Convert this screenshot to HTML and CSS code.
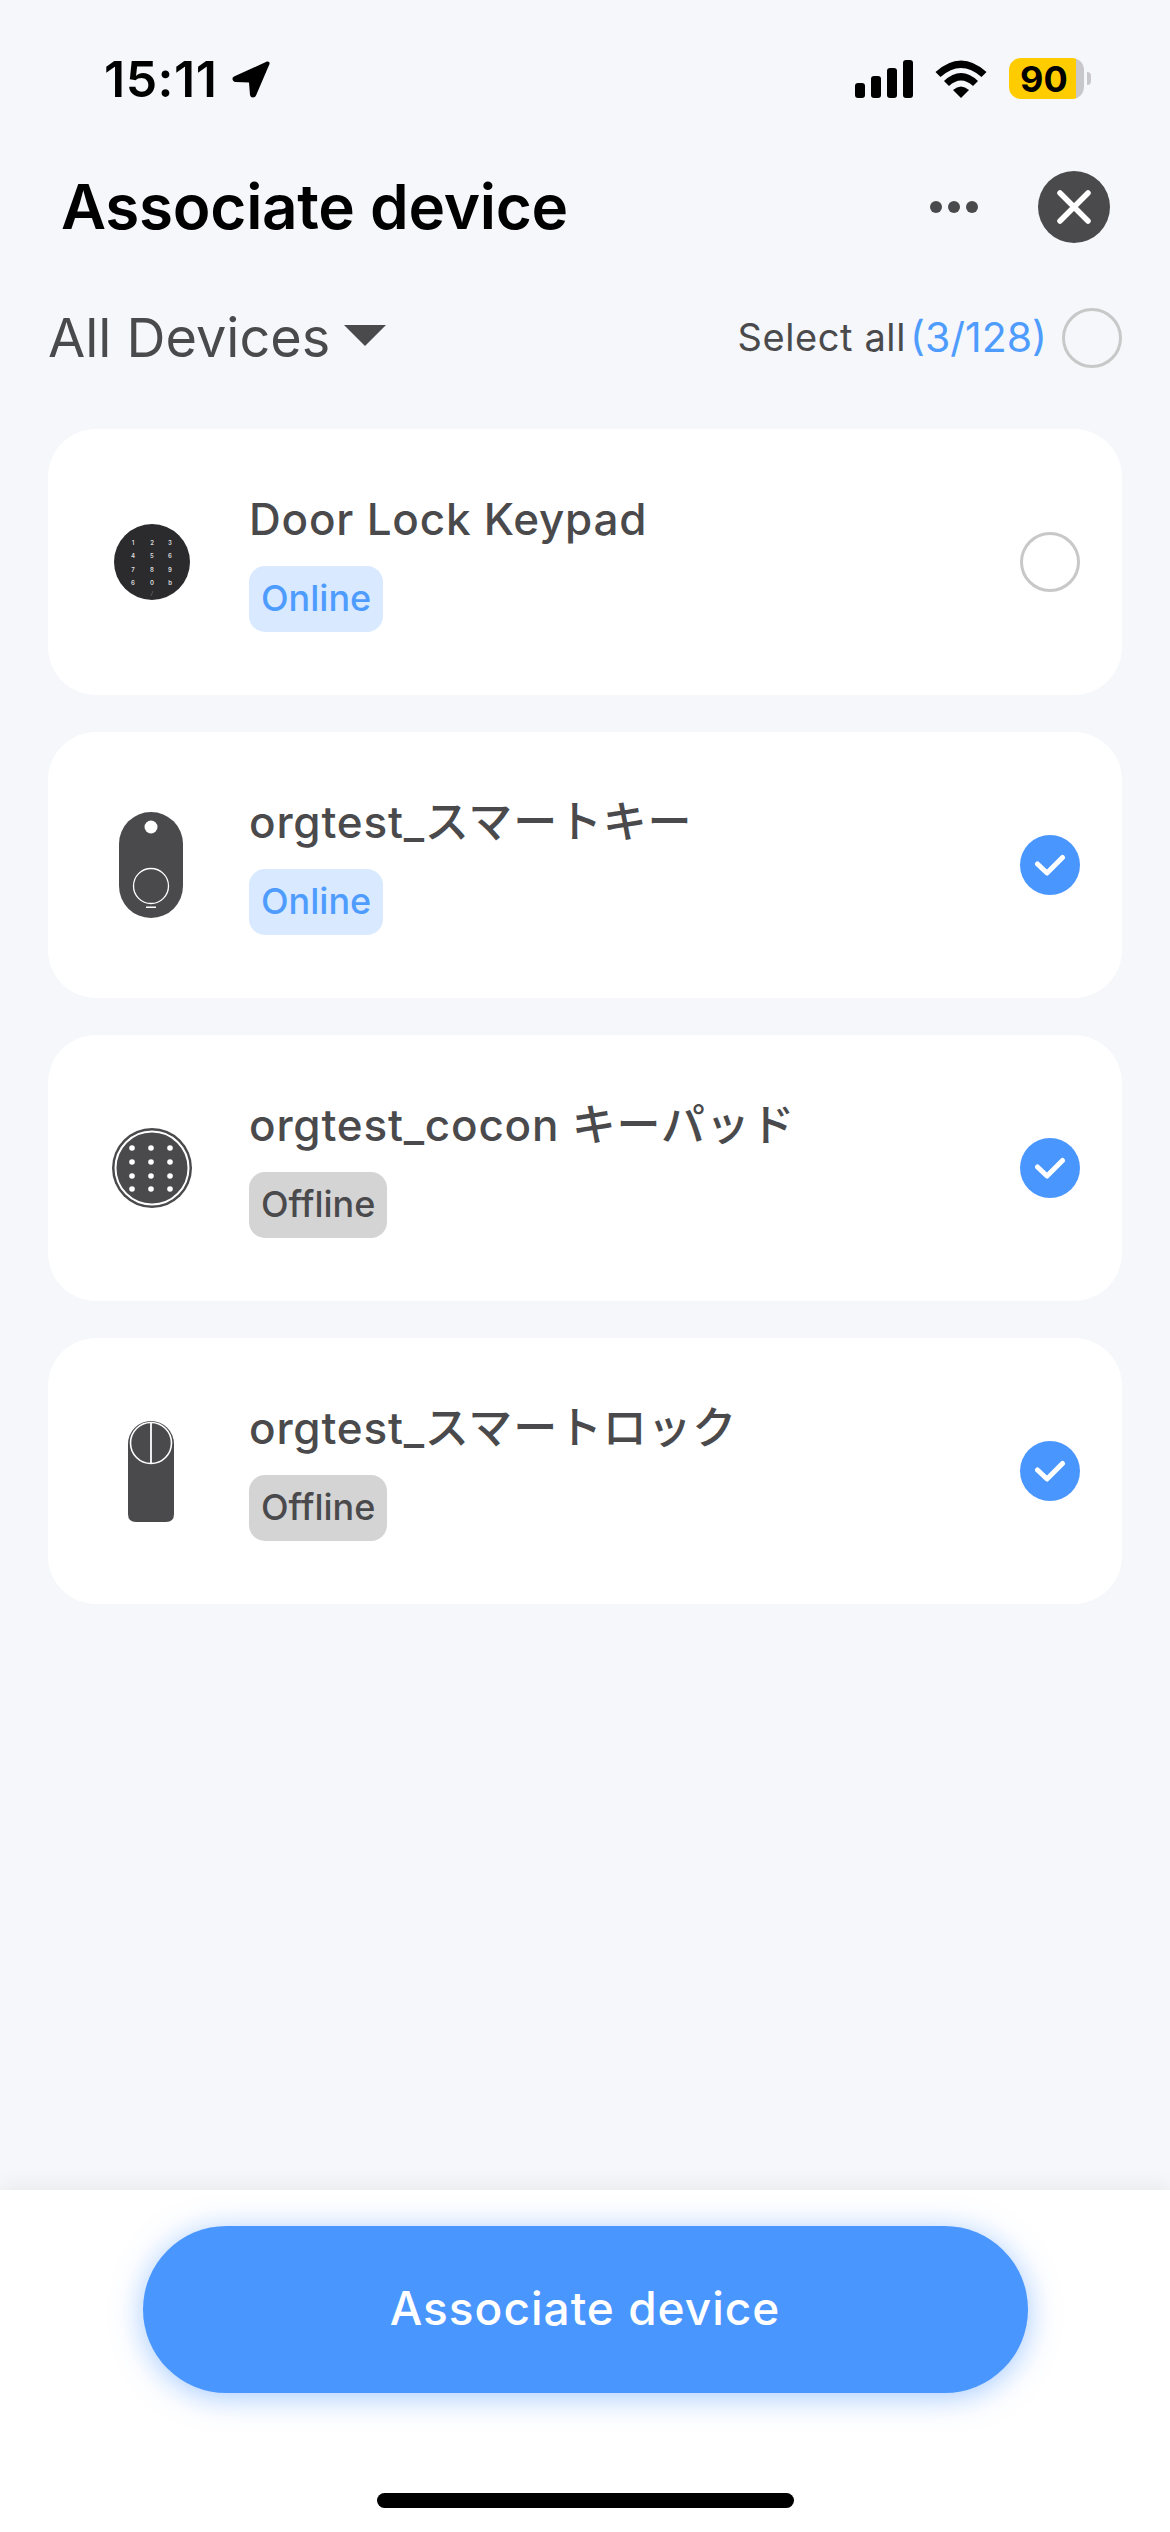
FILE: index.html
```html
<!DOCTYPE html>
<html lang="en">

<head>
    <meta charset="utf-8">
    <link rel="stylesheet" href="styles.css">
</head>

<body>
    <div class="page">
        <div class="status-bar">
            <div class="status-bar__left">
                <span class="status-bar__time">15:11</span>
                <svg class="status-bar__arrow" width="40" height="40" viewBox="0 0 40 40">
                    <path d="M36 2.500 L3 17.500 Q0.500 19 2 21.500 Q3 23 5 23 L18 23.500 L19 36 Q19.500 38.500 22 38.500 Q24 38.500 25 36.500 L38.500 5 Q39 2 36 2.500 Z" fill="#000" />
                </svg>
            </div>
            <div class="status-bar__right">
                <svg width="58" height="38" viewBox="0 0 58 38">
                    <rect x="0" y="23" width="10" height="15" rx="3" fill="#000" />
                    <rect x="16" y="16" width="10" height="22" rx="3" fill="#000" />
                    <rect x="32" y="8" width="10" height="30" rx="3" fill="#000" />
                    <rect x="48" y="0" width="10" height="38" rx="3" fill="#000" />
                </svg>
                <svg class="status-bar__wifi" width="52" height="38" viewBox="0 0 52 38">
                    <path d="M0.500 12 Q26 -11 51.500 12 L46.500 17 Q26 -1 5.500 17 Z" fill="#000" />
                    <path d="M9 21 Q26 5 43 21 L38 26 Q26 15 14 26 Z" fill="#000" />
                    <path d="M18 30 Q26 23 34 30 L26 38 Z" fill="#000" />
                </svg>
                <div class="battery">
                    <div class="battery__body">
                        <span class="battery__level">90</span>
                    </div>
                    <div class="battery__nub"></div>
                </div>
            </div>
        </div>

        <div class="header">
            <h1 class="header__title">Associate device</h1>
            <div class="header__actions">
                <div class="more-dots"><span></span><span></span><span></span></div>
                <div class="close-btn">
                    <svg width="36" height="36" viewBox="0 0 36 36">
                        <path d="M4 4 L32 32 M32 4 L4 32" stroke="#fff" stroke-width="5.500" stroke-linecap="round" />
                    </svg>
                </div>
            </div>
        </div>

        <div class="filter">
            <div class="filter__select">
                <span>All Devices</span>
                <div class="filter__caret"></div>
            </div>
            <div class="filter__all">
                <span class="filter__label">Select all</span>
                <span class="filter__count">(3/128)</span>
                <div class="radio"></div>
            </div>
        </div>

        <div class="device-list">
            <div class="device">
                <div class="device__icon">
                    <svg width="112" height="112" viewBox="0 0 112 112">
                        <circle cx="56" cy="56" r="38" fill="#2b2b2d" />
                        <g class="keypad-digits">
                            <text x="37" y="39">1</text><text x="56" y="39">2</text><text x="74" y="39">3</text>
                            <text x="37" y="52">4</text><text x="56" y="52">5</text><text x="74" y="52">6</text>
                            <text x="37" y="66">7</text><text x="56" y="66">8</text><text x="74" y="66">9</text>
                            <text x="37" y="79">6</text><text x="56" y="79">0</text><text x="74" y="79">b</text>
                        </g>
                        <path d="M55 90 L57 85" stroke="#555" stroke-width="1" />
                    </svg>
                </div>
                <div class="device__info">
                    <div class="device__name">Door Lock Keypad</div>
                    <span class="badge badge--online">Online</span>
                </div>
                <div class="radio"></div>
            </div>

            <div class="device">
                <div class="device__icon">
                    <svg width="112" height="112" viewBox="0 0 112 112">
                        <rect x="23" y="3" width="64" height="106" rx="32" fill="#4a4a4c" />
                        <circle cx="55" cy="18" r="6.500" fill="#fff" />
                        <circle cx="55" cy="77" r="17.500" fill="none" stroke="#fff" stroke-width="1.300" />
                        <rect x="50" y="97.500" width="10" height="1.500" fill="#fff" />
                    </svg>
                </div>
                <div class="device__info">
                    <div class="device__name">orgtest_スマートキー</div>
                    <span class="badge badge--online">Online</span>
                </div>
                <div class="radio radio--checked">
                    <svg width="32" height="28" viewBox="0 0 32 28">
                        <path d="M3.500 13 L13 22 L28.500 6.500" fill="none" stroke="#fff" stroke-width="5" stroke-linecap="round" stroke-linejoin="round" />
                    </svg>
                </div>
            </div>

            <div class="device">
                <div class="device__icon">
                    <svg width="112" height="112" viewBox="0 0 112 112">
                        <circle cx="56" cy="56" r="40" fill="#4a4a4c" />
                        <circle cx="56" cy="56" r="36.500" fill="none" stroke="#fff" stroke-width="2" />
                        <g fill="#fff">
                            <circle cx="36" cy="36" r="2.800" /><circle cx="55" cy="36" r="2.800" /><circle cx="74" cy="36" r="2.800" />
                            <circle cx="36" cy="50" r="2.800" /><circle cx="55" cy="50" r="2.800" /><circle cx="74" cy="50" r="2.800" />
                            <circle cx="36" cy="64" r="2.800" /><circle cx="55" cy="64" r="2.800" /><circle cx="74" cy="64" r="2.800" />
                            <circle cx="36" cy="77" r="2.800" /><circle cx="55" cy="77" r="2.800" /><circle cx="74" cy="77" r="2.800" />
                        </g>
                    </svg>
                </div>
                <div class="device__info">
                    <div class="device__name">orgtest_cocon キーパッド</div>
                    <span class="badge badge--offline">Offline</span>
                </div>
                <div class="radio radio--checked">
                    <svg width="32" height="28" viewBox="0 0 32 28">
                        <path d="M3.500 13 L13 22 L28.500 6.500" fill="none" stroke="#fff" stroke-width="5" stroke-linecap="round" stroke-linejoin="round" />
                    </svg>
                </div>
            </div>

            <div class="device">
                <div class="device__icon">
                    <svg width="112" height="112" viewBox="0 0 112 112">
                        <path d="M32 29 A23 23 0 0 1 78 29 V99 Q78 107 70 107 H40 Q32 107 32 99 Z" fill="#4a4a4c" />
                        <circle cx="55" cy="28" r="20.500" fill="none" stroke="#fff" stroke-width="1.600" />
                        <path d="M55 7.500 V48.500" stroke="#fff" stroke-width="1.800" />
                    </svg>
                </div>
                <div class="device__info">
                    <div class="device__name">orgtest_スマートロック</div>
                    <span class="badge badge--offline">Offline</span>
                </div>
                <div class="radio radio--checked">
                    <svg width="32" height="28" viewBox="0 0 32 28">
                        <path d="M3.500 13 L13 22 L28.500 6.500" fill="none" stroke="#fff" stroke-width="5" stroke-linecap="round" stroke-linejoin="round" />
                    </svg>
                </div>
            </div>
        </div>

        <div class="footer">
            <button class="associate-btn">Associate device</button>
            <div class="home-bar"></div>
        </div>
    </div>
</body>

</html>
```

FILE: styles.css
```css
*,
*::after,
*::before {
    box-sizing: border-box;
}

body {
    margin: 0;
    background-color: #f5f7fb;
    font-family: Inter, "Noto Sans CJK JP", sans-serif;
}

.page {
    height: 2532px;
    display: flex;
    flex-direction: column;
}

.status-bar {
    height: 57px;
    margin-top: 50px;
    padding: 0 79px 0 104px;
    display: flex;
    justify-content: space-between;
    align-items: center;
}

.status-bar__left,
.status-bar__right {
    display: flex;
    align-items: center;
}

.status-bar__time {
    font-size: 50px;
    font-weight: 600;
    letter-spacing: 0.5px;
    color: #000;
}

.status-bar__arrow {
    margin-left: 14px;
}

.status-bar__wifi {
    margin-left: 22px;
}

.battery {
    margin-left: 22px;
    display: flex;
    align-items: center;
}

.battery__body {
    width: 75px;
    height: 41px;
    border-radius: 12px;
    background: linear-gradient(to right, #ffcc00 0 90%, #c8c8cc 90%);
    display: flex;
    align-items: center;
    padding-left: 11px;
}

.battery__level {
    font-size: 36px;
    font-weight: 700;
    color: #000;
}

.battery__nub {
    width: 4px;
    height: 13px;
    margin-left: 3px;
    border-radius: 0 6px 6px 0;
    background-color: #c8c8cc;
}

.header {
    margin-top: 64px;
    padding: 0 60px 0 61px;
    display: flex;
    justify-content: space-between;
    align-items: center;
}

.header__title {
    margin: 0;
    font-size: 62px;
    font-weight: 600;
    letter-spacing: -0.3px;
    line-height: 72px;
    color: #000;
}

.header__actions {
    display: flex;
    align-items: center;
    gap: 60px;
}

.more-dots {
    display: flex;
    gap: 6px;
}

.more-dots span {
    width: 12px;
    height: 12px;
    border-radius: 50%;
    background-color: #4a4a4c;
}

.close-btn {
    width: 72px;
    height: 72px;
    border-radius: 50%;
    background-color: #4a4a4c;
    display: flex;
    align-items: center;
    justify-content: center;
}

.filter {
    margin-top: 62px;
    padding: 0 48px;
    display: flex;
    justify-content: space-between;
    align-items: center;
}

.filter__select {
    display: flex;
    align-items: center;
    gap: 14px;
    font-size: 54px;
    color: #4a4a4c;
}

.filter__caret {
    width: 0;
    height: 0;
    margin-bottom: 4px;
    border-left: 21px solid transparent;
    border-right: 21px solid transparent;
    border-top: 21px solid #4a4a4c;
}

.filter__all {
    display: flex;
    align-items: center;
    font-size: 38px;
}

.filter__label {
    margin-bottom: 2px;
    color: #4a4a4c;
    letter-spacing: 0.6px;
}

.filter__count {
    margin-left: 4px;
    margin-bottom: 2px;
    font-size: 41px;
    color: #4f9cff;
}

.filter__all .radio {
    margin-left: 15px;
}

.radio {
    width: 60px;
    height: 60px;
    flex-shrink: 0;
    border: 3px solid #c8c8c8;
    border-radius: 50%;
    display: flex;
    align-items: center;
    justify-content: center;
}

.radio--checked {
    border: none;
    background-color: #4a96ff;
}

.device-list {
    flex: 1;
    margin-top: 59px;
    padding: 0 48px;
    display: flex;
    flex-direction: column;
    gap: 37px;
}

.device {
    height: 266px;
    padding: 0 42px 0 48px;
    border-radius: 48px;
    background-color: #fff;
    display: flex;
    align-items: center;
}

.device__icon {
    width: 112px;
    height: 112px;
    flex-shrink: 0;
}

.device__info {
    flex: 1;
    margin-left: 41px;
    margin-bottom: 3px;
    display: flex;
    flex-direction: column;
    align-items: flex-start;
}

.device__name {
    font-size: 44px;
    font-weight: 500;
    line-height: 60px;
    letter-spacing: 0.8px;
    color: #4a4a4c;
}

.badge {
    margin-top: 17px;
    height: 66px;
    padding: 0 12px;
    border-radius: 16px;
    font-size: 36px;
    font-weight: 500;
    line-height: 64px;
}

.badge--online {
    background-color: #d9e9ff;
    color: #4f9cff;
}

.badge--offline {
    background-color: #d4d4d4;
    color: #4a4a4c;
}

.keypad-digits text {
    font-size: 6px;
    font-weight: 600;
    fill: #ddd;
    text-anchor: middle;
}

.footer {
    height: 342px;
    padding-top: 36px;
    background-color: #fff;
    box-shadow: 0 -4px 20px rgba(0, 0, 0, 0.06);
    display: flex;
    flex-direction: column;
    align-items: center;
}

.associate-btn {
    width: 885px;
    height: 167px;
    padding-bottom: 4px;
    border: none;
    border-radius: 84px;
    background-color: #4a96ff;
    box-shadow: 0 4px 30px rgba(74, 150, 255, 0.5);
    color: #fff;
    font-family: inherit;
    font-size: 46px;
    font-weight: 500;
    letter-spacing: 1px;
}

.home-bar {
    width: 417px;
    height: 15px;
    margin-top: 100px;
    border-radius: 8px;
    background-color: #000;
}
```
